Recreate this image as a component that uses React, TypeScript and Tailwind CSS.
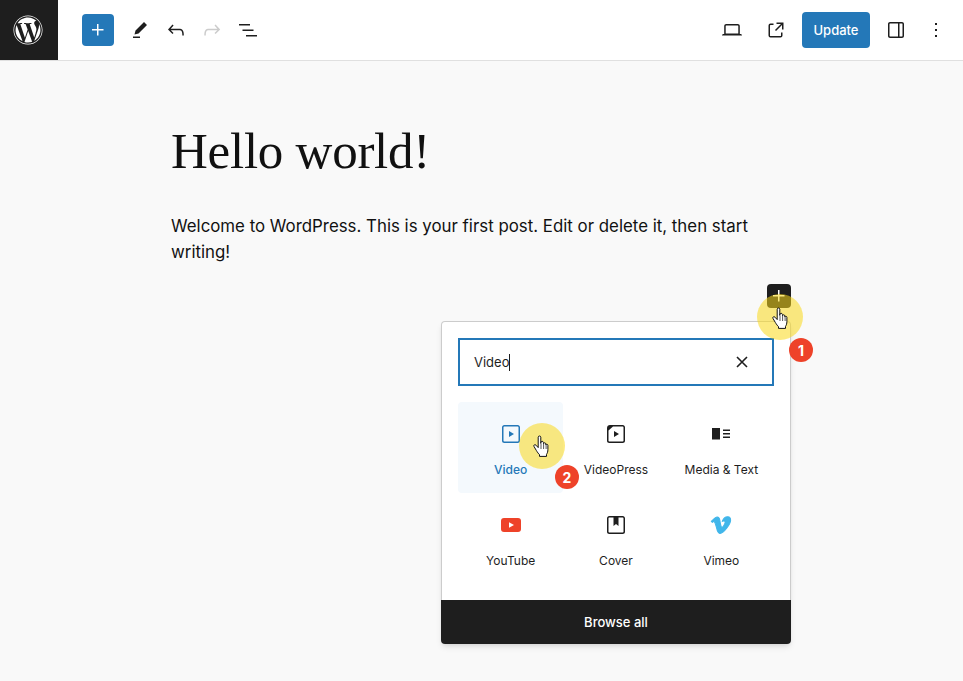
import { FaWordpress, FaVimeoV } from "react-icons/fa";

const Ico = ({ d, size = 24, className = "" }: { d: string; size?: number; className?: string }) => (
  <svg viewBox="0 0 24 24" width={size} height={size} className={className} fill="currentColor">
    <path d={d} />
  </svg>
);

const P = {
  plus: "M11 12.5V17.5H12.5V12.5H17.5V11H12.5V6H11V11H6V12.5H11Z",
  pencil: "m19 7-3-3-8.5 8.5-1 4 4-1L19 7Zm-7 11.5H5V20h7v-1.5Z",
  undo: "M18.3 11.7c-.6-.6-1.4-.9-2.3-.9H6.7l2.9-3.3-1.1-1-4.5 5L8.5 16l1-1-2.7-2.7H16c.5 0 .9.2 1.3.5 1 1 1 3.4 1 4.5v.3h1.5v-.2c0-1.5 0-4.3-1.5-5.7z",
  redo: "M15.6 6.5l-1.1 1 2.9 3.3H8c-.9 0-1.7.3-2.3.9-1.4 1.5-1.4 4.2-1.4 5.6v.2h1.5v-.3c0-1.1 0-3.5 1-4.5.3-.3.7-.5 1.3-.5h9.2L14.5 15l1.1 1.1 4.6-4.6-4.6-5z",
  list: "M3 6h11v1.5H3V6Zm3.5 5.5h11V13h-11v-1.5ZM21 17H10v1.5h11V17Z",
  laptop: "M20.5 16h-.7V8c0-1.1-.9-2-2-2H6.2c-1.1 0-2 .9-2 2v8h-.7c-.8 0-1.5.7-1.5 1.5h20c0-.8-.7-1.5-1.5-1.5zM5.7 8c0-.3.2-.5.5-.5h11.6c.3 0 .5.2.5.5v7.6H5.7V8z",
  external: "M19.5 4.5h-7V6h4.44l-5.97 5.97 1.06 1.06L18 7.06v4.44h1.5v-7Zm-13 1a2 2 0 0 0-2 2v10a2 2 0 0 0 2 2h10a2 2 0 0 0 2-2v-3H17v3a.5.5 0 0 1-.5.5h-10a.5.5 0 0 1-.5-.5v-10a.5.5 0 0 1 .5-.5h3V5.5h-3Z",
  drawer: "M18 4H6c-1.1 0-2 .9-2 2v12c0 1.1.9 2 2 2h12c1.1 0 2-.9 2-2V6c0-1.1-.9-2-2-2zm-4 14.5H6c-.3 0-.5-.2-.5-.5V6c0-.3.2-.5.5-.5h8v13zm4.5-.5c0 .3-.2.5-.5.5h-2.5v-13H18c.3 0 .5.2.5.5v12z",
  more: "M13 19h-2v-2h2v2zm0-6h-2v-2h2v2zm0-6h-2V5h2v2z",
  video: "M18.7 3H5.3C4 3 3 4 3 5.3v13.4C3 20 4 21 5.3 21h13.4c1.3 0 2.3-1 2.3-2.3V5.3C21 4 20 3 18.7 3zm.8 15.7c0 .4-.4.8-.8.8H5.3c-.4 0-.8-.4-.8-.8V5.3c0-.4.4-.8.8-.8h13.4c.4 0 .8.4.8.8v13.4zM10 15l5-3-5-3v6z",
  videopress: "M6 3h12.7C20 3 21 4 21 5.3v13.4c0 1.3-1 2.3-2.3 2.3H5.3C4 21 3 20 3 18.7V6c0-1.7 1.3-3 3-3Zm3 1.5L4.5 8.5v10.2c0 .4.4.8.8.8h13.4c.4 0 .8-.4.8-.8V5.3c0-.4-.4-.8-.8-.8H9ZM10 15l5-3-5-3v6Z",
  media: "M3 6v11.5h8V6H3Zm11 3h7V7.5h-7V9Zm7 3.5h-7V11h7v1.5ZM14 16h7v-1.5h-7V16Z",
  cover: "M18.7 3H5.3C4 3 3 4 3 5.3v13.4C3 20 4 21 5.3 21h13.4c1.3 0 2.3-1 2.3-2.3V5.3C21 4 20 3 18.7 3zm.8 15.7c0 .4-.4.8-.8.8H5.3c-.4 0-.8-.4-.8-.8V5.3c0-.4.4-.8.8-.8h4.2V13l2.5-2 2.5 2V4.5h4.2c.4 0 .8.4.8.8v13.4z",
};

const IconBtn = ({ d, className = "text-[#1e1e1e]" }: { d: string; className?: string }) => (
  <div className={`flex h-9 w-9 items-center justify-center ${className}`}>
    <Ico d={d} />
  </div>
);

const Hand = ({ className = "" }: { className?: string }) => (
  <svg viewBox="0 0 17 23" width={17} height={23} className={className} fill="#fff" stroke="#111" strokeWidth={1} strokeLinejoin="round">
    <path d="M5.2 2.2c0-1.6 2.6-1.6 2.6 0V8.5l.1-1.2c.1-1.4 2.4-1.3 2.5.1l.1 1.3c.2-1.3 2.2-1.2 2.3.2v1c.3-1 2-.9 2.1.4v4.2c0 2.2-.5 3.5-1.4 4.9v2H6.5v-1.7c-1-1-2-2.3-3.2-4.3L1 11.5c-.8-1.4 1-2.5 2-1.3l2.2 2.4V2.2Z" />
    <path d="M8 9v5M10.6 9v5M13.1 10v4" fill="none" strokeWidth={0.7} />
  </svg>
);

const Tile = ({ icon, label, active = false }: { icon: React.ReactNode; label: string; active?: boolean }) => (
  <div className={`flex h-[91px] flex-col items-center rounded-sm pt-5 ${active ? "bg-[#f4f9fd] text-[#2478b8]" : "text-[#1e1e1e]"}`}>
    <div className="flex h-6 w-6 items-center justify-center">{icon}</div>
    <div className={`mt-[15px] text-[12px] leading-[18px] ${active ? "font-medium" : ""}`}>{label}</div>
  </div>
);

const Badge = ({ n, className }: { n: number; className: string }) => (
  <div className={`absolute flex h-6 w-6 items-center justify-center rounded-full bg-[#ee4229] text-[14px] font-bold text-white ${className}`}>{n}</div>
);

export default function App() {
  return (
    <div className="relative h-[681px] w-[963px] overflow-hidden bg-[#f9f9f9] font-['Inter',sans-serif] text-[#1e1e1e]">
      <header className="flex h-[61px] items-center justify-between border-b border-[#e0e0e0] bg-white pr-[9px]">
        <div className="flex items-center">
          <div className="flex h-[60px] w-[58px] items-center justify-center bg-[#1e1e1e] pr-0.5 text-white">
            <FaWordpress size={30} />
          </div>
          <div className="ml-6 flex h-8 w-8 items-center justify-center rounded-sm bg-[#2478b8] text-white">
            <Ico d={P.plus} />
          </div>
          <div className="ml-2 flex items-center">
            <IconBtn d={P.pencil} />
            <IconBtn d={P.undo} />
            <IconBtn d={P.redo} className="text-[#cccccc]" />
            <IconBtn d={P.list} />
          </div>
        </div>
        <div className="flex items-center">
          <div className="flex items-center gap-2">
            <IconBtn d={P.laptop} />
            <IconBtn d={P.external} />
            <div className="flex h-9 w-[68px] items-center justify-center rounded-sm bg-[#2478b8] pt-px text-[13px] font-medium text-white">Update</div>
            <IconBtn d={P.drawer} />
          </div>
          <div className="ml-1">
            <IconBtn d={P.more} />
          </div>
        </div>
      </header>

      <main className="pl-[171px] pr-[215px] pt-[58px]">
        <h1 className="font-['Liberation_Serif',serif] text-[51px] leading-[64px] font-normal tracking-[-0.25px] text-[#111]">Hello world!</h1>
        <p className="mt-[30px] text-[16.85px] leading-[26px] text-[#111]">
          Welcome to WordPress. This is your first post. Edit or delete it, then start writing!
        </p>
      </main>

      <div className="absolute left-[767px] top-[284px] flex h-6 w-6 items-center justify-center rounded-sm bg-[#1e1e1e] text-white">
        <Ico d={P.plus} />
      </div>

      <div className="absolute left-[441px] top-[321px] flex h-[323px] w-[350px] flex-col rounded-sm bg-white shadow-md">
        <div className="flex-1 rounded-t-sm border-x border-t border-[#cccccc] px-4 pt-4">
          <div className="flex h-12 items-center justify-between border-2 border-[#2478b8] pb-px pl-[14px] pr-[21px]">
            <div className="flex items-center pt-0.5 text-[13px] text-[#1e1e1e]">
              Video<span className="h-[17px] w-px bg-[#1e1e1e]" />
            </div>
            <svg viewBox="0 0 18 18" width={18} height={18} fill="none" stroke="#1e1e1e" strokeWidth={1.6}>
              <path d="M4 4l10 10M14 4L4 14" />
            </svg>
          </div>
          <div className="mt-4 grid grid-cols-3">
            <Tile active label="Video" icon={<Ico d={P.video} />} />
            <Tile label="VideoPress" icon={<Ico d={P.videopress} />} />
            <Tile label="Media & Text" icon={<Ico d={P.media} />} />
            <Tile
              label="YouTube"
              icon={
                <svg viewBox="0 0 20 14" width={20} height={14}>
                  <rect width="20" height="14" rx="3" fill="#ee4229" />
                  <path d="M8 4.2l5 2.8-5 2.8z" fill="#fff" />
                </svg>
              }
            />
            <Tile label="Cover" icon={<Ico d={P.cover} />} />
            <Tile label="Vimeo" icon={<FaVimeoV size={22} stroke="currentColor" strokeWidth={24} className="text-[#41b6ea]" />} />
          </div>
        </div>
        <div className="flex h-11 items-center justify-center rounded-b-sm bg-[#1e1e1e] pt-px text-[13px] font-medium text-white">Browse all</div>
      </div>

      <div className="absolute left-[757px] top-[294px] h-[46px] w-[46px] rounded-full bg-[#f9d91a]/55" />
      <Hand className="absolute left-[772px] top-[307px]" />
      <Badge n={1} className="left-[789px] top-[338px]" />

      <div className="absolute left-[519px] top-[423px] h-[46px] w-[46px] rounded-full bg-[#f9d91a]/55" />
      <Hand className="absolute left-[533px] top-[435px]" />
      <Badge n={2} className="left-[555px] top-[465px]" />
    </div>
  );
}
